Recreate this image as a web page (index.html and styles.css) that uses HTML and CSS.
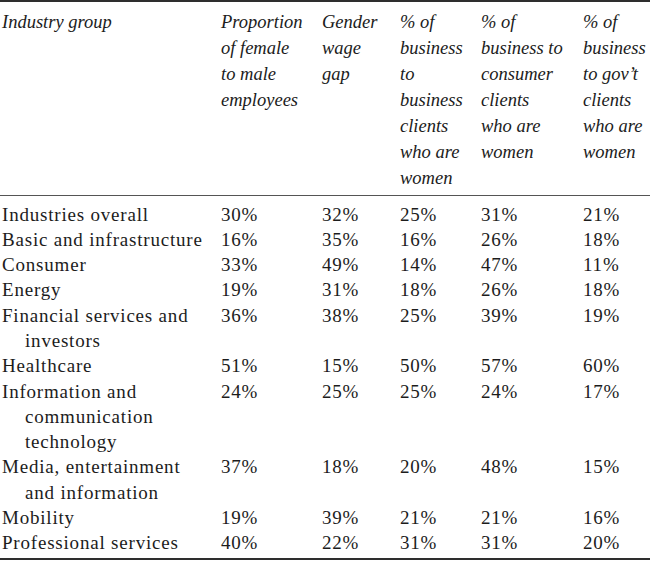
FILE: index.html
```html
<!DOCTYPE html>
<html lang="en">
<head>
<meta charset="utf-8">
<title>Industry group table</title>
<link rel="stylesheet" href="styles.css">
</head>
<body>
<table class="data-table">
  <colgroup>
    <col class="c1"><col class="c2"><col class="c3"><col class="c4"><col class="c5"><col class="c6">
  </colgroup>
  <thead>
    <tr>
      <th class="first">Industry group</th>
      <th>Proportion<br>of female<br>to male<br>employees</th>
      <th>Gender<br>wage<br>gap</th>
      <th>% of<br>business<br>to<br>business<br>clients<br>who are<br>women</th>
      <th>% of<br>business to<br>consumer<br>clients<br>who are<br>women</th>
      <th>% of<br>business<br>to gov’t<br>clients<br>who are<br>women</th>
    </tr>
  </thead>
  <tbody>
    <tr><td class="first">Industries overall</td><td>30%</td><td>32%</td><td>25%</td><td>31%</td><td>21%</td></tr>
    <tr><td class="first">Basic and infrastructure</td><td>16%</td><td>35%</td><td>16%</td><td>26%</td><td>18%</td></tr>
    <tr><td class="first">Consumer</td><td>33%</td><td>49%</td><td>14%</td><td>47%</td><td>11%</td></tr>
    <tr><td class="first">Energy</td><td>19%</td><td>31%</td><td>18%</td><td>26%</td><td>18%</td></tr>
    <tr><td class="first">Financial services and<br>investors</td><td>36%</td><td>38%</td><td>25%</td><td>39%</td><td>19%</td></tr>
    <tr><td class="first">Healthcare</td><td>51%</td><td>15%</td><td>50%</td><td>57%</td><td>60%</td></tr>
    <tr><td class="first">Information and<br>communication<br>technology</td><td>24%</td><td>25%</td><td>25%</td><td>24%</td><td>17%</td></tr>
    <tr><td class="first">Media, entertainment<br>and information</td><td>37%</td><td>18%</td><td>20%</td><td>48%</td><td>15%</td></tr>
    <tr><td class="first">Mobility</td><td>19%</td><td>39%</td><td>21%</td><td>21%</td><td>16%</td></tr>
    <tr><td class="first">Professional services</td><td>40%</td><td>22%</td><td>31%</td><td>31%</td><td>20%</td></tr>
  </tbody>
</table>
</body>
</html>
```
FILE: styles.css
```css
html, body {
  margin: 0;
  padding: 0;
  background: #ffffff;
}

.data-table {
  width: 650px;
  table-layout: fixed;
  border-collapse: collapse;
  border-top: 2px solid #2e2e2e;
  border-bottom: 2px solid #2e2e2e;
  font-family: "Liberation Serif", "Times New Roman", serif;
  color: #1c1c1c;
  font-size: 18.5px;
}

.c1 { width: 221px; }
.c2 { width: 101px; }
.c3 { width: 78px; }
.c4 { width: 81px; }
.c5 { width: 102px; }
.c6 { width: 67px; }

.data-table th,
.data-table td {
  padding: 0;
  text-align: left;
  vertical-align: top;
  white-space: nowrap;
}

.data-table thead th {
  font-style: italic;
  font-weight: normal;
  line-height: 26px;
  padding-top: 7px;
  padding-bottom: 4px;
  border-bottom: 1px solid #555555;
}

.data-table td {
  font-size: 19px;
  line-height: 25.3px;
  letter-spacing: 0.8px;
}

.data-table .first {
  padding-left: 25px;
  text-indent: -23px;
}

.data-table thead .first {
  padding-left: 2px;
  text-indent: 0;
}

.data-table tbody tr:first-child td {
  padding-top: 5.5px;
}

.data-table tbody tr:last-child td {
  padding-bottom: 2px;
}
```
